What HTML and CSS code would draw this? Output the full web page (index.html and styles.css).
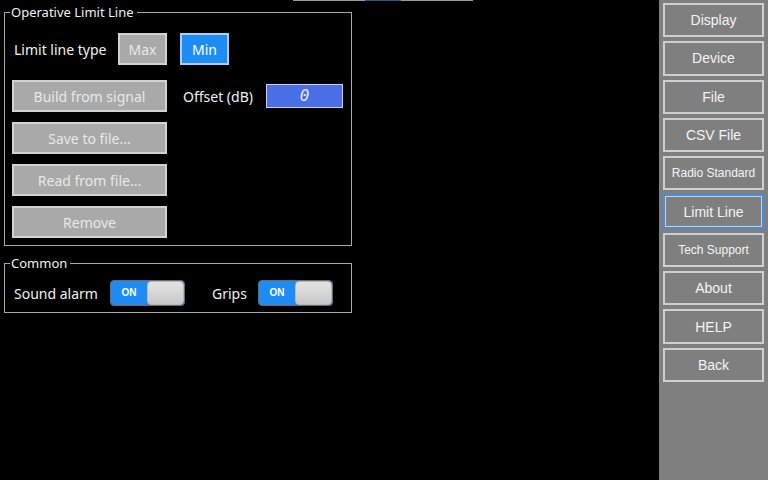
FILE: index.html
```html
<!DOCTYPE html>
<html lang="en">
<head>
    <meta charset="UTF-8">
    <meta name="viewport" content="width=device-width, initial-scale=1.0">
    <title>Limit Line</title>
    <link rel="stylesheet" href="styles.css">
</head>
<body>
    <div class="screen">
        <div class="main">
            <div class="topline"><span class="mark"></span></div>

            <fieldset class="group">
                <legend>Operative Limit Line</legend>
                <div class="row">
                    <span class="label type">Limit line type</span>
                    <button class="btn small">Max</button>
                    <button class="btn small on">Min</button>
                </div>
                <div class="cols">
                    <div class="stack">
                        <button class="btn wide">Build from signal</button>
                        <button class="btn wide">Save to file...</button>
                        <button class="btn wide">Read from file...</button>
                        <button class="btn wide">Remove</button>
                    </div>
                    <div class="offset">
                        <span class="label">Offset (dB)</span>
                        <span class="field">0</span>
                    </div>
                </div>
            </fieldset>

            <fieldset class="group common">
                <legend>Common</legend>
                <div class="row">
                    <span class="label alarm">Sound alarm</span>
                    <span class="toggle"><b>ON</b><i></i></span>
                    <span class="label grips">Grips</span>
                    <span class="toggle"><b>ON</b><i></i></span>
                </div>
            </fieldset>
        </div>

        <div class="side">
            <button class="nav">Display</button>
            <button class="nav">Device</button>
            <button class="nav">File</button>
            <button class="nav">CSV File</button>
            <button class="nav small-text">Radio Standard</button>
            <button class="nav current">Limit Line</button>
            <button class="nav small-text">Tech Support</button>
            <button class="nav">About</button>
            <button class="nav">HELP</button>
            <button class="nav">Back</button>
        </div>
    </div>
</body>
</html>
```

FILE: styles.css
```css
*{
    margin: 0;
    padding: 0;
    box-sizing: border-box;
}
body{
    background: #000;
    color: #f0f0f0;
    font-family: "Noto Sans", "Open Sans", sans-serif;
    font-size: 14px;
}
.screen{
    display: flex;
    width: 768px;
    height: 480px;
}
.main{
    flex: 1;
    position: relative;
}
.topline{
    position: absolute;
    left: 293px;
    top: 0;
    width: 180px;
    height: 1px;
    background: #9a9a9a;
}
.topline .mark{
    display: block;
    margin-left: 72px;
    width: 36px;
    height: 1px;
    background: #2a5a8a;
}

.group{
    width: 348px;
    margin: 4px 0 0 4px;
    border: 1px solid #a8a8a8;
    padding: 0 7px 7px 7px;
}
.group legend{
    margin-left: -2px;
    padding: 0 3px 0 1px;
    font-size: 13px;
    line-height: 16px;
}
.common{
    margin-top: 9px;
    padding-bottom: 6px;
}

.row{
    display: flex;
    align-items: center;
    margin-top: 13px;
}
.common .row{
    margin-top: 9px;
}
.label{
    padding-left: 2px;
}
.type{
    width: 106px;
}
.alarm{
    width: 98px;
}
.grips{
    width: 48px;
    margin-left: 25px;
}

button{
    font-family: inherit;
    font-size: 14px;
    cursor: pointer;
}
.btn{
    height: 32px;
    background: #a9a9a9;
    color: #e8e8e8;
    border: 2px solid #d2d2d2;
}
.btn.small{
    width: 49px;
    margin-right: 13px;
}
.btn.on{
    background: #1e8cf5;
    border-color: #a8d0ff;
    color: #fff;
}
.btn.wide{
    width: 155px;
}

.cols{
    display: flex;
    margin-top: 15px;
}
.stack{
    display: flex;
    flex-direction: column;
    gap: 10px;
}
.offset{
    display: flex;
    align-items: center;
    align-self: flex-start;
    height: 32px;
    margin-left: 14px;
}
.offset .label{
    width: 85px;
}
.field{
    width: 77px;
    height: 24px;
    background: #4a6ee6;
    border: 1px solid #c8d4f8;
    color: #e8f0ff;
    text-align: center;
    font-family: "DejaVu Sans Mono", monospace;
    font-style: italic;
    font-size: 16px;
    line-height: 22px;
}

.toggle{
    display: flex;
    width: 75px;
    height: 26px;
    border: 1px solid #6a6a6a;
    border-radius: 4px;
    overflow: hidden;
    background: #1e8cf5;
}
.toggle b{
    width: 36px;
    color: #fff;
    font-size: 10px;
    line-height: 24px;
    text-align: center;
    font-family: "Liberation Sans", sans-serif;
}
.toggle i{
    flex: 1;
    background: linear-gradient(#e4e4e4, #c8c8c8);
    border-radius: 4px;
    border: 1px solid #b8b8b8;
}

.side{
    width: 109px;
    background: #7f7f7f;
    display: flex;
    flex-direction: column;
    padding: 3px 4px 0 4px;
    gap: 4px;
}
.nav{
    height: 34.3px;
    background: #7f7f7f;
    border: 2px solid #cfcfcf;
    color: #f4f4f4;
    font-family: "Liberation Sans", Arial, sans-serif;
    font-size: 14px;
}
.nav.small-text{
    font-size: 12px;
}
.nav.current{
    border-color: #3f8ee0;
    outline: 1px solid #cfcfcf;
    outline-offset: -3px;
}
```
